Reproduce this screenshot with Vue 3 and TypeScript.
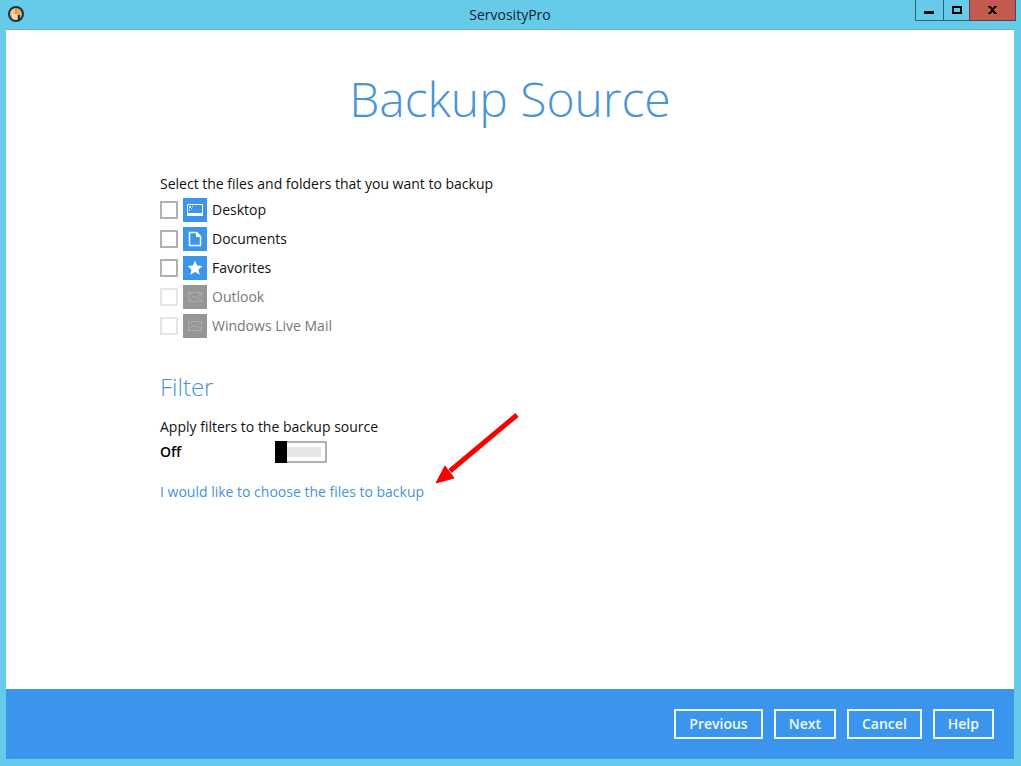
<script setup lang="ts">
import { ref } from 'vue'

type IconName = 'desktop' | 'document' | 'star' | 'mail'

interface Source {
  id: string
  label: string
  icon: IconName
  disabled: boolean
  checked: boolean
}

const sources = ref<Source[]>([
  { id: 'desktop', label: 'Desktop', icon: 'desktop', disabled: false, checked: false },
  { id: 'documents', label: 'Documents', icon: 'document', disabled: false, checked: false },
  { id: 'favorites', label: 'Favorites', icon: 'star', disabled: false, checked: false },
  { id: 'outlook', label: 'Outlook', icon: 'mail', disabled: true, checked: false },
  { id: 'live-mail', label: 'Windows Live Mail', icon: 'mail', disabled: true, checked: false },
])

const filterOn = ref(false)
const actions: string[] = ['Previous', 'Next', 'Cancel', 'Help']
</script>

<template>
  <div class="window">
    <header class="titlebar">
      <svg class="app-icon" viewBox="0 0 16 16" aria-hidden="true">
        <circle cx="8" cy="8" r="7" fill="#f0a860" stroke="#17334a" stroke-width="2" />
        <path d="M7 2.500A5.500 5.500 0 0 0 2.500 9L7 7Z" fill="#fbc890" />
        <path d="M4 8h5v5.500H6L4 12Z" fill="#fbd9ae" />
        <path d="M8 2v6" stroke="#cf8138" />
        <path d="M10 9h2v4l-2 1Z" fill="#17334a" />
      </svg>
      <h1 class="app-name">ServosityPro</h1>
      <div class="caption">
        <button class="cap minimize" type="button" aria-label="Minimize">
          <svg viewBox="0 0 10 10" aria-hidden="true"><path d="M0 6h10v3H0z" /></svg>
        </button>
        <button class="cap maximize" type="button" aria-label="Maximize">
          <svg viewBox="0 0 10 10" aria-hidden="true">
            <path d="M0 1h10v8H0zM2 3v4h6V3z" fill-rule="evenodd" />
          </svg>
        </button>
        <button class="cap close" type="button" aria-label="Close">
          <svg viewBox="0 0 10 10" aria-hidden="true">
            <path d="M0 1h3v1h1v1h1V2h1V1h3v1H8v1H7v1H6v2h1v1h1v1h1v1H6V8H5V7H4v1H3v1H0V8h1V7h1V6h1V4H2V3H1V2H0z" />
          </svg>
        </button>
      </div>
    </header>

    <main class="content">
      <h2 class="title">Backup Source</h2>
      <div class="form">
        <p class="line">Select the files and folders that you want to backup</p>
        <ul class="sources">
          <li v-for="s in sources" :key="s.id">
            <label class="source" :class="{ disabled: s.disabled }" :for="s.id">
              <input :id="s.id" v-model="s.checked" class="check" type="checkbox" :disabled="s.disabled" />
              <svg class="tile" viewBox="0 0 24 24" aria-hidden="true">
                <g v-if="s.icon === 'desktop'">
                  <path d="M4.500 6.500h15v11h-15z" fill="none" stroke="#fff" />
                  <path d="M4 15h16v3H4z" fill="#fff" />
                  <path d="M6 8h2v2H6zM9 8h1v1H9zM8 10h1v1H8zM6 11h1v2H6z" fill="#fff" opacity=".8" />
                </g>
                <g v-else-if="s.icon === 'document'">
                  <path d="M6.500 5.500h7l4 4v9h-11z" fill="none" stroke="#fff" stroke-width="1.500" />
                  <path d="M13 5v5h5z" fill="#fff" />
                </g>
                <path
                  v-else-if="s.icon === 'star'"
                  d="M12 4.500l2.200 5 5.300.5-4 3.600 1.200 5.200-4.700-2.700-4.700 2.700 1.200-5.200-4-3.600 5.300-.5z"
                  fill="#fff"
                />
                <path
                  v-else
                  d="M5.500 7.500h13v9h-13zM5.500 7.500l6.500 5.500 6.500-5.500M5.500 16.500l4.500-5M18.500 16.500l-4.500-5"
                  fill="none"
                  stroke="#acacac"
                />
              </svg>
              <span>{{ s.label }}</span>
            </label>
          </li>
        </ul>

        <h3 class="subtitle">Filter</h3>
        <p class="line">Apply filters to the backup source</p>
        <label class="filter">
          <span class="state">{{ filterOn ? 'On' : 'Off' }}</span>
          <input v-model="filterOn" class="toggle" type="checkbox" role="switch" aria-label="Apply filters" />
        </label>

        <p class="choose">
          <a href="#">I would like to choose the files to backup</a>
          <svg class="arrow" viewBox="0 0 84 72" aria-hidden="true">
            <path d="M81 2L14 58" stroke="#fb0000" stroke-width="5" />
            <path d="M0 70L9 53 18 65z" fill="#fb0000" stroke="#fb0000" />
          </svg>
        </p>
      </div>
    </main>

    <footer class="actions">
      <button v-for="a in actions" :key="a" class="action" type="button">{{ a }}</button>
    </footer>
  </div>
</template>

<style>
body {
  margin: 0;
}
</style>

<style scoped>
.window {
  box-sizing: border-box;
  display: flex;
  flex-direction: column;
  min-height: 100vh;
  padding: 0 7px 7px 6px;
  background: #66cae9;
  color: #111;
  font: 14px/20px "Open Sans", "Noto Sans", sans-serif;
}

.titlebar {
  display: grid;
  grid-template-columns: 1fr auto 1fr;
  align-items: start;
  height: 29px;
  border-bottom: 1px solid #5fb4cf;
}

.app-icon {
  width: 16px;
  height: 16px;
  margin: 6px 0 0 2px;
}

.app-name {
  margin: 5px 0 0;
  color: #10242c;
  font-size: 14px;
  font-weight: 400;
  line-height: 20px;
}

.caption {
  display: flex;
  justify-self: end;
  margin-right: -2px;
}

.cap {
  box-sizing: border-box;
  display: flex;
  justify-content: center;
  width: 28px;
  height: 21px;
  margin: 0;
  padding: 5px 0 0;
  border: 1px solid #2f6478;
  border-top: 0;
  border-right: 0;
  background: transparent;
}

.cap svg {
  width: 10px;
  height: 10px;
}

.minimize {
  padding-right: 1px;
}

.maximize {
  width: 26px;
}

.close {
  width: 47px;
  border-right: 1px solid #6d3b3e;
  border-color: #6d3b3e;
  background: #c35a50;
}

.content {
  flex: 1;
  background: #fff;
}

.title {
  margin: 36px 0 0;
  color: #4794d6;
  font-size: 48px;
  font-weight: 300;
  line-height: 66px;
  text-align: center;
}

.form {
  padding: 42px 24px 24px 154px;
}

.line {
  margin: 0;
}

.sources {
  display: grid;
  gap: 5px;
  margin: 4px 0 0;
  padding: 0;
  list-style: none;
}

.source {
  display: flex;
  align-items: center;
  gap: 5px;
  width: fit-content;
  height: 24px;
}

.check {
  box-sizing: border-box;
  appearance: none;
  width: 18px;
  height: 18px;
  margin: 0;
  border: 2px solid #b1b1b1;
  background: #fff;
}

.check:checked {
  background: #3b95ed;
}

.tile {
  width: 24px;
  height: 24px;
  background: #3b95ed;
}

.disabled {
  color: #777;
}

.disabled .check {
  border-color: #e6e6e6;
}

.disabled .tile {
  background: #969696;
}

.subtitle {
  margin: 32px 0 13px;
  color: #4794d6;
  font-size: 24px;
  font-weight: 300;
  line-height: 34px;
}

.filter {
  display: flex;
  align-items: center;
  margin-top: 4px;
}

.state {
  width: 115px;
  color: #000;
  font-weight: 600;
}

.toggle {
  box-sizing: border-box;
  appearance: none;
  position: relative;
  width: 52px;
  height: 22px;
  margin: 0;
  padding: 4px;
  border: 2px solid #b1b1b1;
  background: linear-gradient(#e6e6e6, #e6e6e6) content-box, #fff;
}

.toggle::before {
  content: "";
  position: absolute;
  top: -2px;
  bottom: -2px;
  left: -2px;
  width: 12px;
  background: #000;
}

.toggle:checked::before {
  right: -2px;
  left: auto;
}

.choose {
  position: relative;
  width: fit-content;
  margin: 19px 0 0;
}

.choose a {
  color: #4794d6;
  text-decoration: none;
}

.arrow {
  position: absolute;
  bottom: 17px;
  left: calc(100% + 12px);
  width: 84px;
  height: 72px;
}

.actions {
  display: flex;
  justify-content: flex-end;
  gap: 11px;
  padding: 20px;
  background: #3b95ed;
}

.action {
  padding: 3px 13px;
  border: 2px solid #eefaff;
  background: transparent;
  color: #eefaff;
  font: 600 14px/20px "Open Sans", "Noto Sans", sans-serif;
}
</style>
